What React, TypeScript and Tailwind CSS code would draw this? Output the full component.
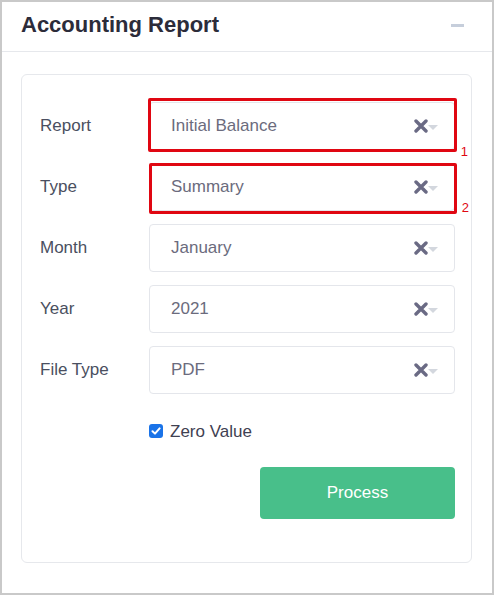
import React from "react";

const fields = [
  { label: "Report", value: "Initial Balance", mark: "1" },
  { label: "Type", value: "Summary", mark: "2" },
  { label: "Month", value: "January" },
  { label: "Year", value: "2021" },
  { label: "File Type", value: "PDF" },
];

const ClearIcon = () => (
  <svg width="14" height="14" viewBox="0 0 14 14" className="shrink-0">
    <path d="M2 2L12 12M12 2L2 12" stroke="#6a6a84" strokeWidth="3.4" strokeLinecap="round" />
  </svg>
);

const Caret = () => (
  <svg width="10" height="5" viewBox="0 0 10 5" className="shrink-0 mt-[3px]">
    <path d="M0 0H10L5 5Z" fill="#d3d7de" />
  </svg>
);

type FieldProps = { label: string; value: string; mark?: string };

const SelectRow: React.FC<FieldProps> = ({ label, value, mark }) => (
  <div className="flex items-center">
    <div className="w-[109px] text-[17px] text-[#4a4f60]">{label}</div>
    <div className="relative flex-1">
      <div className="flex items-center h-[48px] pl-[21px] pr-[16px] rounded-[4px] border border-[#e4e6eb] bg-white">
        <span className="flex-1 text-[17px] text-[#6b6b7d]">{value}</span>
        <ClearIcon />
        <Caret />
      </div>
      {mark && (
        <>
          <div
            className={
              mark === "1"
                ? "absolute -left-[1px] -right-[2px] -top-[4px] -bottom-[2px] border-[3px] border-[#e00712] rounded-[2px]"
                : "absolute left-0 -right-[2px] top-0 -bottom-[3px] border-[3px] border-[#e00712] rounded-[2px]"
            }
          />
          <span
            className={
              mark === "1"
                ? "absolute -right-[13px] bottom-[-8px] text-[13px] leading-none text-[#e00712]"
                : "absolute -right-[14px] bottom-[-3px] text-[13px] leading-none text-[#e00712]"
            }
          >
            {mark}
          </span>
        </>
      )}
    </div>
  </div>
);

export default function App() {
  return (
    <div
      className="w-[494px] h-[595px] border-2 border-[#c9c9c9] bg-white flex flex-col"
      style={{ fontFamily: '"Liberation Sans", Arial, sans-serif' }}
    >
      <div className="h-[50px] shrink-0 border-b border-[#e6e8ec] flex items-center justify-between pl-[19px] pr-[28px]">
        <h1 className="text-[22px] font-bold text-[#2c2c3a] leading-none -mt-[3px]">Accounting Report</h1>
        <span className="block w-[13px] h-[3px] bg-[#c6cedb] -mt-[3px]" />
      </div>

      <div className="pl-[19px] pr-[20px] pt-[22px]">
        <div className="border border-[#e6e8ec] rounded-[6px] pl-[18px] pr-[16px] pt-[27px] pb-[42px] h-[489px]">
          <div className="flex flex-col gap-[13px]">
            {fields.map((f) => (
              <SelectRow key={f.label} {...f} />
            ))}
          </div>

          <div className="flex items-center gap-[7px] ml-[109px] mt-[28px] h-[20px]">
            <span className="w-[14px] h-[14px] rounded-[3px] bg-[#1a73e8] flex items-center justify-center -mt-[3px]">
              <svg width="10" height="10" viewBox="0 0 10 10">
                <path d="M1.5 5.2L4 7.6L8.6 2.4" stroke="white" strokeWidth="2" fill="none" strokeLinecap="round" strokeLinejoin="round" />
              </svg>
            </span>
            <span className="text-[17px] text-[#3f4152]">Zero Value</span>
          </div>

          <div className="flex justify-end mt-[25px]">
            <button className="w-[195px] h-[52px] rounded-[4px] bg-[#48bf8a] text-white text-[17px]">
              Process
            </button>
          </div>
        </div>
      </div>
    </div>
  );
}
